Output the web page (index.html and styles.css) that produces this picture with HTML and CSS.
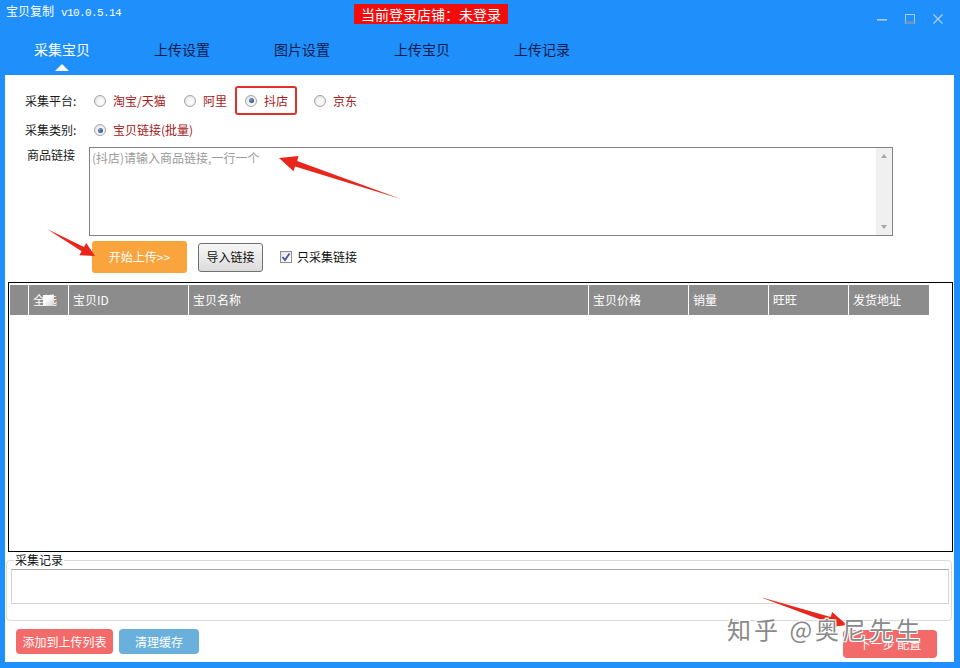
FILE: index.html
```html
<!DOCTYPE html>
<html lang="zh-CN">
<head>
<meta charset="utf-8">
<title>宝贝复制</title>
<link rel="stylesheet" href="styles.css">
</head>
<body>
<div class="window">
  <header class="titlebar">
    <div class="app-title">宝贝复制<span class="app-version">v10.0.5.14</span></div>
    <div class="login-badge">当前登录店铺：未登录</div>
    <div></div>
    <div class="win-controls">
      <svg class="win-icon" width="12" height="12" viewBox="0 0 12 12"><rect x="1" y="6" width="10" height="1.6" fill="#a9cdf2"/></svg>
      <svg class="win-icon" width="12" height="12" viewBox="0 0 12 12"><rect x="1.5" y="1.5" width="9" height="9" fill="none" stroke="#a9cdf2" stroke-width="1"/><rect x="1.5" y="8.5" width="9" height="2.5" fill="#6f93bd"/></svg>
      <svg class="win-icon" width="12" height="12" viewBox="0 0 12 12"><path d="M1.5 1.5 L10.5 10.5 M10.5 1.5 L1.5 10.5" stroke="#a9cdf2" stroke-width="1.4"/></svg>
    </div>
  </header>

  <nav class="tabs">
    <span class="tab active">采集宝贝</span>
    <span class="tab">上传设置</span>
    <span class="tab">图片设置</span>
    <span class="tab">上传宝贝</span>
    <span class="tab">上传记录</span>
  </nav>

  <main class="content">
    <div class="form-row row-platform">
      <span class="field-label">采集平台:</span>
      <span class="radio radio-taobao"><span class="radio-circle"></span>淘宝/天猫</span>
      <span class="radio radio-ali"><span class="radio-circle"></span>阿里</span>
      <span class="platform-highlight">
        <span class="radio checked"><span class="radio-circle"></span>抖店</span>
      </span>
      <span class="radio radio-jd"><span class="radio-circle"></span>京东</span>
    </div>

    <div class="form-row row-category">
      <span class="field-label">采集类别:</span>
      <span class="radio checked"><span class="radio-circle"></span>宝贝链接(批量)</span>
    </div>

    <div class="form-row row-links">
      <span class="field-label">商品链接</span>
      <div class="link-input">
        <div class="link-placeholder">(抖店)请输入商品链接,一行一个</div>
        <div class="scrollbar">
          <span class="arrow-up"></span>
          <span class="arrow-down"></span>
        </div>
      </div>
    </div>

    <div class="form-row row-actions">
      <span class="btn btn-start">开始上传&gt;&gt;</span>
      <span class="btn btn-import">导入链接</span>
      <span class="check">
        <span class="check-box">
          <svg width="10" height="10" viewBox="0 0 10 10"><path d="M1.5 5 L4 8 L8.5 1.5" fill="none" stroke="#4b4f9c" stroke-width="1.8"/></svg>
        </span>只采集链接
      </span>
    </div>

    <div class="goods-table">
      <div class="table-head">
        <span class="th col-idx"></span>
        <span class="th col-check">全选<span class="select-all-box"></span></span>
        <span class="th col-id">宝贝ID</span>
        <span class="th col-name">宝贝名称</span>
        <span class="th col-price">宝贝价格</span>
        <span class="th col-sales">销量</span>
        <span class="th col-ww">旺旺</span>
        <span class="th col-addr">发货地址</span>
      </div>
    </div>

    <fieldset class="log-group">
      <legend class="log-legend">采集记录</legend>
      <div class="log-box"></div>
    </fieldset>

    <div class="bottom-bar">
      <span class="btn btn-add">添加到上传列表</span>
      <span class="btn btn-clear">清理缓存</span>
      <span class="btn btn-next">下一步 配置</span>
    </div>
  </main>

  <svg class="annotations" width="960" height="668" viewBox="0 0 960 668">
    <polygon points="279,158 298.6,156.1 297.1,160.9 401,199 295.1,166.5 293.5,171.3" fill="#e8261c"/>
    <polygon points="95,256 79.4,255.2 81.6,251.3 47,229 84.0,246.9 86.2,243.0" fill="#e8261c"/>
    <polygon points="847,625 832.1,612.1 830.7,616.9 760,597 828.9,622.7 827.5,627.5" fill="#e8261c"/>
  </svg>
  <div class="watermark">知乎 @奥尼先生</div>
</div>
</body>
</html>
```

FILE: styles.css
```css
* {
  box-sizing: border-box;
}

html,
body {
  margin: 0;
  padding: 0;
}

body {
  font-family: "Noto Sans CJK SC", "Liberation Sans", sans-serif;
  font-size: 12px;
  background: #1e8ffb;
}

.window {
  position: relative;
  width: 960px;
  height: 668px;
  background: #1e8ffb;
  display: flex;
  flex-direction: column;
  overflow: hidden;
}

/* title bar */
.titlebar {
  height: 28px;
  display: grid;
  grid-template-columns: 354px auto 1fr auto;
  align-items: start;
}

.app-title {
  padding: 4px 0 0 6px;
  color: #fff;
  font-size: 12px;
  line-height: 14px;
}

.app-version {
  font-family: "Liberation Mono", "DejaVu Sans Mono", monospace;
  font-size: 11px;
  letter-spacing: -0.6px;
  margin-left: 7px;
}

.login-badge {
  margin-top: 4px;
  background: #f20d0d;
  color: #fff;
  font-size: 14px;
  line-height: 20px;
  padding: 0 7px;
}

.win-controls {
  display: flex;
  gap: 16px;
  padding: 13px 16px 0 0;
}

.win-icon {
  display: block;
}

/* tabs */
.tabs {
  height: 47px;
  display: flex;
  padding-left: 2px;
}

.tab {
  width: 120px;
  display: flex;
  flex-direction: column;
  align-items: center;
  padding-top: 11px;
  color: #0e1c4e;
  font-size: 14px;
  line-height: 20px;
}

.tab.active {
  color: #fff;
}

.tab.active::after {
  content: "";
  margin-top: 5px;
  border-left: 7px solid transparent;
  border-right: 7px solid transparent;
  border-bottom: 7px solid #fff;
}

/* content */
.content {
  flex: 1;
  margin: 0 6px 6px 5px;
  background: #fff;
  padding-top: 11px;
  display: flex;
  flex-direction: column;
}

.form-row {
  display: flex;
  align-items: center;
}

.field-label {
  width: 69px;
  color: #1a1a1a;
  line-height: 16px;
}

.row-platform {
  height: 29px;
  padding-left: 20px;
}

.radio {
  display: inline-flex;
  align-items: center;
  gap: 7px;
  color: #a3211b;
  line-height: 16px;
  white-space: nowrap;
}

.radio-circle {
  width: 12px;
  height: 12px;
  border-radius: 50%;
  border: 1px solid #a4a4a4;
  background: radial-gradient(circle at 60% 60%, #ffffff 0, #f3f3f3 45%, #d9d9d9 100%);
  display: flex;
  align-items: center;
  justify-content: center;
}

.radio.checked .radio-circle::after {
  content: "";
  width: 5px;
  height: 5px;
  border-radius: 50%;
  background: radial-gradient(circle at 35% 35%, #7a98c8, #1d3d72);
}

.radio-taobao {
  width: 90px;
}

.radio-ali {
  width: 51px;
}

.platform-highlight {
  display: flex;
  align-items: center;
  height: 29px;
  width: 62px;
  border: 2px solid #e5302a;
  border-radius: 3px;
  padding-left: 8px;
}

.radio-jd {
  margin-left: 17px;
}

.row-category {
  height: 20px;
  margin-top: 5px;
  padding-left: 20px;
}

.row-links {
  margin-top: 7px;
  padding-left: 22px;
  align-items: flex-start;
}

.row-links .field-label {
  width: 62px;
  line-height: 14px;
  padding-top: 1px;
}

.link-input {
  width: 804px;
  height: 89px;
  border: 1px solid #828282;
  display: flex;
}

.link-placeholder {
  flex: 1;
  padding: 2px 2px;
  color: #9a9a9a;
  line-height: 16px;
}

.scrollbar {
  width: 16px;
  background: #f0f0f0;
  display: flex;
  flex-direction: column;
  justify-content: space-between;
  align-items: center;
  padding: 6px 0;
}

.arrow-up {
  border-left: 3px solid transparent;
  border-right: 3px solid transparent;
  border-bottom: 4px solid #a6a6a6;
}

.arrow-down {
  border-left: 3px solid transparent;
  border-right: 3px solid transparent;
  border-top: 4px solid #a6a6a6;
}

.row-actions {
  margin-top: 5px;
  padding-left: 87px;
  height: 32px;
}

.btn {
  display: flex;
  align-items: center;
  justify-content: center;
  white-space: nowrap;
  line-height: 16px;
}

.btn-start {
  width: 95px;
  height: 32px;
  background: #f9a43d;
  color: #fff;
  border-radius: 3px;
}

.btn-import {
  margin-left: 11px;
  width: 65px;
  height: 29px;
  border: 1px solid #707070;
  border-radius: 3px;
  background: linear-gradient(#f7f7f7, #dcdcdc);
  color: #111;
}

.check {
  margin-left: 17px;
  display: inline-flex;
  align-items: center;
  gap: 5px;
  color: #111;
  line-height: 16px;
}

.check-box {
  width: 12px;
  height: 12px;
  border: 1px solid #8f8f8f;
  background: linear-gradient(135deg, #e4e4e4, #ffffff);
  display: flex;
  align-items: center;
  justify-content: center;
}

.check-box svg {
  display: block;
}

/* table */
.goods-table {
  margin: 9px 0 0 3px;
  width: 945px;
  height: 270px;
  border: 1px solid #000;
  padding: 2px 1px 1px 1px;
}

.table-head {
  display: flex;
  height: 30px;
}

.th {
  background: #8c8c8c;
  color: #fff;
  border-right: 1px solid #fff;
  padding-left: 4px;
  line-height: 30px;
  white-space: nowrap;
  overflow: hidden;
}

.col-idx { width: 19px; }
.col-check { width: 40px; position: relative; }
.col-id { width: 120px; }
.col-name { width: 400px; }
.col-price { width: 100px; }
.col-sales { width: 80px; }
.col-ww { width: 80px; }
.col-addr { width: 80px; border-right: none; }

.select-all-box {
  position: absolute;
  left: 14px;
  top: 10px;
  width: 11px;
  height: 11px;
  background: linear-gradient(135deg, #ffffff 35%, #d2d2d2);
}

/* log group */
.log-group {
  margin: 0 2px 0 1px;
  border: 1px solid #dadada;
  border-radius: 4px;
  padding: 0 2px 16px 4px;
  min-width: 0;
}

.log-legend {
  margin-left: 3px;
  padding: 0 1px;
  line-height: 16px;
  color: #111;
  font-size: 12px;
}

.log-box {
  margin-top: 1px;
  height: 35px;
  border: 1px solid #d6d6d6;
  border-top-color: #a8a8a8;
}

/* bottom bar */
.bottom-bar {
  margin-top: 8px;
  display: flex;
  align-items: flex-start;
  padding: 0 17px 0 11px;
}

.btn-add {
  width: 97px;
  height: 25px;
  background: #f26a6a;
  color: #fff;
  border-radius: 4px;
}

.btn-clear {
  margin-left: 6px;
  width: 80px;
  height: 25px;
  background: #6ab0dc;
  color: #fff;
  border-radius: 4px;
}

.btn-next {
  margin-left: auto;
  margin-top: 1px;
  width: 94px;
  height: 28px;
  background: #f26a6a;
  color: #fff;
  border-radius: 4px;
}

/* overlays */
.annotations {
  position: absolute;
  left: 0;
  top: 0;
  pointer-events: none;
}

.watermark {
  position: absolute;
  left: 727px;
  top: 613px;
  font-family: "Noto Sans CJK SC", "Liberation Sans", sans-serif;
  font-size: 24px;
  line-height: 32px;
  letter-spacing: 3px;
  color: #8a8a8a;
  text-shadow: 1px 1px 0 #fff, -1px -1px 0 #fff, 1px -1px 0 #fff, -1px 1px 0 #fff;
  white-space: nowrap;
  pointer-events: none;
}
```
